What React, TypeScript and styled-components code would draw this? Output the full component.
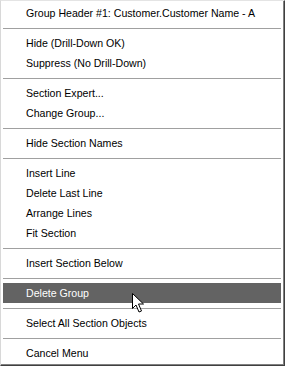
import React from "react";
import styled, { createGlobalStyle } from "styled-components";

const Global = createGlobalStyle`
  html, body { margin: 0; padding: 0; background: #ffffff; }
  #root { width: 285px; height: 366px; }
`;

const Menu = styled.div`
  position: relative;
  box-sizing: border-box;
  width: 285px;
  height: 366px;
  background: #ffffff;
  border-left: 1px solid #d8d8d8;
  border-top: 1px solid #e4e4e4;
  border-right: 1px solid #404040;
  border-bottom: 1px solid #404040;
  box-shadow: inset -1px -1px 0 #808080, inset -2px -2px 0 #ffffff;
  padding: 2px 3px 0 2px;
  display: flex;
  flex-direction: column;
  font-family: "Liberation Sans", Arial, sans-serif;
  font-size: 10.6px;
  color: #000000;
`;

const Item = styled.div<{ $active?: boolean }>`
  position: relative;
  height: 20px;
  display: flex;
  align-items: center;
  padding-left: 23px;
  white-space: nowrap;
  background: ${(p) => (p.$active ? "#636363" : "transparent")};
  color: ${(p) => (p.$active ? "#ffffff" : "#000000")};
`;

const Separator = styled.div`
  height: 10px;
  display: flex;
  flex-direction: column;
  justify-content: flex-start;
  &::before {
    content: "";
    display: block;
    margin-top: 5px;
    height: 1px;
    background: #a0a0a0;
  }
`;

const Cursor = styled.svg`
  position: absolute;
  left: 128px;
  top: 9px;
  width: 14px;
  height: 22px;
  z-index: 2;
`;

type Entry = { label: string } | "sep";

const entries: Entry[] = [
  { label: "Group Header #1: Customer.Customer Name - A" },
  "sep",
  { label: "Hide (Drill-Down OK)" },
  { label: "Suppress (No Drill-Down)" },
  "sep",
  { label: "Section Expert..." },
  { label: "Change Group..." },
  "sep",
  { label: "Hide Section Names" },
  "sep",
  { label: "Insert Line" },
  { label: "Delete Last Line" },
  { label: "Arrange Lines" },
  { label: "Fit Section" },
  "sep",
  { label: "Insert Section Below" },
  "sep",
  { label: "Delete Group" },
  "sep",
  { label: "Select All Section Objects" },
  "sep",
  { label: "Cancel Menu" },
];

export default function App() {
  return (
    <>
      <Global />
      <Menu>
        {entries.map((e, i) =>
          e === "sep" ? (
            <Separator key={i} />
          ) : (
            <Item key={i} $active={e.label === "Delete Group"}>
              {e.label}
              {e.label === "Delete Group" && (
                <Cursor viewBox="0 0 14 22">
                  <path
                    d="M1.5 1.5 L1.5 16.5 L5 13 L8 20 L10.5 19 L7.5 12 L12.5 12 Z"
                    fill="#ffffff"
                    stroke="#000000"
                    strokeWidth="1"
                    strokeLinejoin="miter"
                  />
                </Cursor>
              )}
            </Item>
          )
        )}
      </Menu>
    </>
  );
}
